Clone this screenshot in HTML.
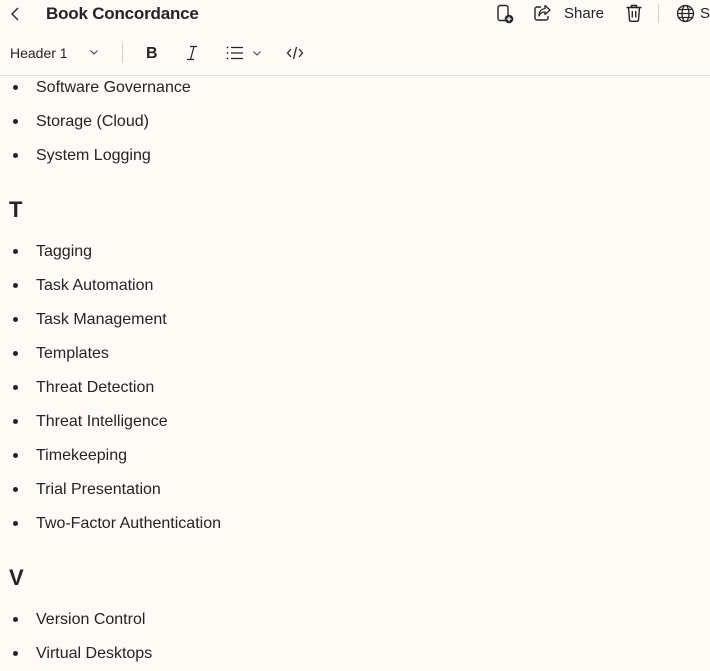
<!DOCTYPE html>
<html><head><style>
body{margin:0;width:710px;height:671px;overflow:hidden;background:#fffaf6;font-family:"Liberation Sans",sans-serif;color:#242424;position:relative}
.a{position:absolute;white-space:nowrap}
.li{position:absolute;left:36px;font-size:16px;line-height:20px;margin-top:2px}
.li:before{content:"";position:absolute;left:-23px;top:7px;width:5px;height:5px;border-radius:50%;background:#242424}
.h{position:absolute;left:9px;font-size:22px;font-weight:bold;line-height:26px;margin-top:1px}
svg{position:absolute}
</style></head><body>
<svg style="left:9px;top:6px" width="14" height="16" viewBox="0 0 14 16"><path d="M9 2L3 8l6 6" fill="none" stroke="#242424" stroke-width="1.4"/></svg>
<div class="a" style="left:46px;top:4px;font-size:17px;line-height:20px;font-weight:bold;letter-spacing:-0.2px">Book Concordance</div>
<svg style="left:496px;top:4px" width="18" height="20" viewBox="0 0 18 20"><rect x="2" y="1.5" width="10" height="15" rx="2" fill="none" stroke="#242424" stroke-width="1.4"/><circle cx="13" cy="15" r="4.3" fill="#242424"/><path d="M13 12.7v4.6M10.7 15h4.6" stroke="#fff" stroke-width="1.3"/></svg>
<svg style="left:533px;top:4px" width="20" height="18" viewBox="0 0 20 18"><path d="M8 3H4a2 2 0 0 0-2 2v9a2 2 0 0 0 2 2h9a2 2 0 0 0 2-2v-2" fill="none" stroke="#242424" stroke-width="1.4"/><path d="M12 1.5l5 4.5-5 4.5V8c-3 0-5 1-6 4 0-4 2-7 6-7.5z" fill="none" stroke="#242424" stroke-width="1.3" stroke-linejoin="round"/></svg>
<div class="a" style="left:564px;top:5px;font-size:15px;line-height:18px">Share</div>
<svg style="left:625px;top:3px" width="18" height="20" viewBox="0 0 18 20"><path d="M1.5 4.5h15M6.5 4.5V2.5h5v2M3.5 4.5l1 12.5a1.5 1.5 0 0 0 1.5 1.3h6a1.5 1.5 0 0 0 1.5-1.3l1-12.5M7.3 8v6.5M10.7 8v6.5" fill="none" stroke="#242424" stroke-width="1.4"/></svg>
<div class="a" style="left:658px;top:4px;width:1px;height:19px;background:#d0ccc8"></div>
<svg style="left:676px;top:4px" width="19" height="19" viewBox="0 0 19 19"><circle cx="9.5" cy="9.5" r="8" fill="none" stroke="#242424" stroke-width="1.3"/><ellipse cx="9.5" cy="9.5" rx="3.5" ry="8" fill="none" stroke="#242424" stroke-width="1.3"/><path d="M1.5 9.5h16M2.8 5.5h13.4M2.8 13.5h13.4" stroke="#242424" stroke-width="1.2"/></svg>
<div class="a" style="left:700px;top:5px;font-size:15px;line-height:18px">Se</div>
<div class="a" style="left:10px;top:44px;font-size:14px;line-height:18px">Header 1</div>
<svg style="left:89px;top:48px" width="10" height="8" viewBox="0 0 10 8"><path d="M1.5 2.5l3.5 3.5 3.5-3.5" fill="none" stroke="#444" stroke-width="1.1"/></svg>
<div class="a" style="left:122px;top:43px;width:1px;height:20px;background:#d0ccc8"></div>
<div class="a" style="left:146px;top:44px;font-size:16px;font-weight:bold;line-height:20px">B</div>
<svg style="left:185px;top:45px" width="14" height="16" viewBox="0 0 14 16"><path d="M5 1.5h7M2 14.5h7M9 1.5L5.5 14.5" fill="none" stroke="#242424" stroke-width="1.2"/></svg>
<svg style="left:226px;top:45px" width="18" height="16" viewBox="0 0 18 16"><path d="M5 2.5h12M5 8h12M5 13.5h12" stroke="#242424" stroke-width="1.3"/><circle cx="1.5" cy="2.5" r="0.9" fill="#242424"/><circle cx="1.5" cy="8" r="0.9" fill="#242424"/><circle cx="1.5" cy="13.5" r="0.9" fill="#242424"/></svg>
<svg style="left:252px;top:49px" width="10" height="8" viewBox="0 0 10 8"><path d="M1.5 2.5l3.5 3.5 3.5-3.5" fill="none" stroke="#444" stroke-width="1.1"/></svg>
<svg style="left:286px;top:45px" width="18" height="16" viewBox="0 0 18 16"><path d="M5 4L1.5 8 5 12M13 4l3.5 4-3.5 4M10.5 2L7.5 14" fill="none" stroke="#242424" stroke-width="1.3"/></svg>
<div class="a" style="left:0;top:75px;width:710px;height:1px;background:#e6e1dd"></div>
<div class="li" style="top:76px">Software Governance</div>
<div class="li" style="top:110px">Storage (Cloud)</div>
<div class="li" style="top:144px">System Logging</div>
<div class="h" style="top:196px">T</div>
<div class="li" style="top:240px">Tagging</div>
<div class="li" style="top:274px">Task Automation</div>
<div class="li" style="top:308px">Task Management</div>
<div class="li" style="top:342px">Templates</div>
<div class="li" style="top:376px">Threat Detection</div>
<div class="li" style="top:410px">Threat Intelligence</div>
<div class="li" style="top:444px">Timekeeping</div>
<div class="li" style="top:478px">Trial Presentation</div>
<div class="li" style="top:512px">Two-Factor Authentication</div>
<div class="h" style="top:564px">V</div>
<div class="li" style="top:608px">Version Control</div>
<div class="li" style="top:642px">Virtual Desktops</div>
</body></html>
